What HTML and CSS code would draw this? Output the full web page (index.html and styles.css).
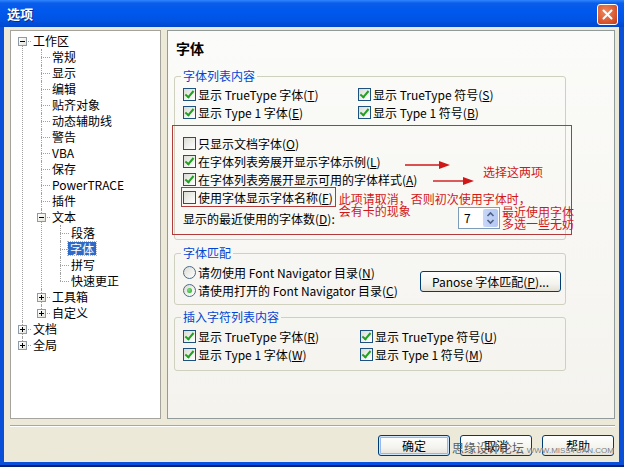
FILE: index.html
```html
<!DOCTYPE html>
<html lang="zh-CN">
  <head>
    <meta charset="UTF-8" />
    <title>选项</title>
    <link rel="stylesheet" href="styles.css">
  </head>
  <body>
    <div class="window">
      <div class="titlebar">
        <span class="title">选项</span>
        <span class="close">
          <svg width="11" height="11" viewBox="0 0 11 11"><path d="M1.5 1.5 L9.5 9.5 M9.5 1.5 L1.5 9.5" stroke="#fff" stroke-width="2" stroke-linecap="round"/></svg>
        </span>
      </div>
      <div class="client">
        <div class="main">
          <!-- 左侧树 -->
          <div class="tree">
            <ul class="root">
              <li><span class="box minus"></span><div class="label">工作区</div>
                <ul>
                  <li><div class="label">常规</div></li>
                  <li><div class="label">显示</div></li>
                  <li><div class="label">编辑</div></li>
                  <li><div class="label">贴齐对象</div></li>
                  <li><div class="label">动态辅助线</div></li>
                  <li><div class="label">警告</div></li>
                  <li><div class="label">VBA</div></li>
                  <li><div class="label">保存</div></li>
                  <li><div class="label">PowerTRACE</div></li>
                  <li><div class="label">插件</div></li>
                  <li><span class="box minus"></span><div class="label">文本</div>
                    <ul>
                      <li><div class="label">段落</div></li>
                      <li><div class="label"><span class="sel">字体</span></div></li>
                      <li><div class="label">拼写</div></li>
                      <li><div class="label">快速更正</div></li>
                    </ul>
                  </li>
                  <li><span class="box plus"></span><div class="label">工具箱</div></li>
                  <li><span class="box plus"></span><div class="label">自定义</div></li>
                </ul>
              </li>
              <li><span class="box plus"></span><div class="label">文档</div></li>
              <li><span class="box plus"></span><div class="label">全局</div></li>
            </ul>
          </div>

          <!-- 右侧页面 -->
          <div class="page">
            <h1 class="heading">字体</h1>

            <fieldset class="group">
              <legend>字体列表内容</legend>
              <div class="grid">
                <label class="opt"><i class="cb on"></i>显示 TrueType 字体(<u>T</u>)</label>
                <label class="opt"><i class="cb on"></i>显示 TrueType 符号(<u>S</u>)</label>
                <label class="opt"><i class="cb on"></i>显示 Type 1 字体(<u>E</u>)</label>
                <label class="opt"><i class="cb on"></i>显示 Type 1 符号(<u>B</u>)</label>
              </div>
              <div class="mark">
                <label class="opt row"><i class="cb"></i>只显示文档字体(<u>O</u>)</label>
                <label class="opt row"><i class="cb on"></i>在字体列表旁展开显示字体示例(<u>L</u>)</label>
                <label class="opt row"><i class="cb on"></i>在字体列表旁展开显示可用的字体样式(<u>A</u>)</label>
                <div class="row">
                  <label class="opt flag"><i class="cb"></i>使用字体显示字体名称(<u>F</u>)</label>
                  <span class="note">此项请取消，否则初次使用字体时，<br>会有卡的现象</span>
                </div>
                <div class="row count">
                  <span>显示的最近使用的字体数(<u>D</u>):</span>
                  <span class="spin">
                    <span class="val">7</span>
                    <span class="arrows">
                      <svg width="13" height="18" viewBox="0 0 13 18"><path d="M3.5 7 L6.5 4 L9.5 7 M3.5 11 L6.5 14 L9.5 11" fill="none" stroke="#4d6185" stroke-width="1.6"/></svg>
                    </span>
                  </span>
                  <span class="note small">最近使用字体<br>多选一些无妨</span>
                </div>
                <div class="callout">
                  <svg class="arrows-red" width="72" height="30" viewBox="0 0 72 30">
                    <line x1="0" y1="7" x2="36" y2="7" stroke="#d01818" stroke-width="1.4"/>
                    <polygon points="34,3 45,7 34,11" fill="#d01818"/>
                    <line x1="28" y1="23" x2="60" y2="23" stroke="#d01818" stroke-width="1.4"/>
                    <polygon points="58,19 69,23 58,27" fill="#d01818"/>
                  </svg>
                  <span class="note pick">选择这两项</span>
                </div>
              </div>
            </fieldset>

            <fieldset class="group match">
              <legend>字体匹配</legend>
              <div class="match-body">
                <div>
                  <label class="opt row"><i class="rb"></i>请勿使用 Font Navigator 目录(<u>N</u>)</label>
                  <label class="opt row"><i class="rb on"></i>请使用打开的 Font Navigator 目录(<u>C</u>)</label>
                </div>
                <button class="btn panose">Panose 字体匹配(<u>P</u>)...</button>
              </div>
            </fieldset>

            <fieldset class="group insert">
              <legend>插入字符列表内容</legend>
              <div class="grid wide">
                <label class="opt"><i class="cb on"></i>显示 TrueType 字体(<u>R</u>)</label>
                <label class="opt"><i class="cb on"></i>显示 TrueType 符号(<u>U</u>)</label>
                <label class="opt"><i class="cb on"></i>显示 Type 1 字体(<u>W</u>)</label>
                <label class="opt"><i class="cb on"></i>显示 Type 1 符号(<u>M</u>)</label>
              </div>
            </fieldset>
          </div>
        </div>

        <div class="sep"></div>

        <div class="footer">
          <button class="btn default">确定</button>
          <button class="btn">取消</button>
          <button class="btn">帮助</button>
        </div>
      </div>
      <div class="watermark">思缘设计论坛 <span>WWW.MISSYUAN.COM</span></div>
    </div>
  </body>
</html>
```

FILE: styles.css
```css
* {
  margin: 0;
  padding: 0;
  box-sizing: border-box;
}
body {
  width: 624px;
  height: 467px;
  overflow: hidden;
  font-family: "Noto Sans CJK SC", "Liberation Sans", sans-serif;
  font-size: 12px;
  color: #000;
  background: #0845cf;
}
ul {
  list-style: none;
}
u {
  text-decoration: underline;
  text-underline-offset: 1px;
}
.window {
  position: relative;
  width: 624px;
  height: 467px;
  display: flex;
  flex-direction: column;
  background: linear-gradient(90deg, #0a4fd8, #0552e6 50%, #0a4fd8);
  border-bottom: 2px solid #00207a;
}
/* 
  标题栏
*/
.titlebar {
  height: 27px;
  flex: none;
  display: flex;
  align-items: center;
  justify-content: space-between;
  padding: 0 6px 0 7px;
  background: linear-gradient(#2f86ff 0, #0a5de9 12%, #0058ee 40%, #0054e3 75%, #0047cc 100%);
}
.title {
  color: #fff;
  font-weight: bold;
  font-size: 13px;
  text-shadow: 1px 1px 0 #0b2a8a;
}
.close {
  width: 21px;
  height: 21px;
  margin-top: 1px;
  border: 1px solid #fff;
  border-radius: 3px;
  background: radial-gradient(circle at 40% 35%, #f08a5e, #d5512a 70%, #b83a18);
  display: flex;
  align-items: center;
  justify-content: center;
}
.client {
  flex: 1;
  margin: 0 5px 3px 4px;
  padding: 3px 4px 0 6px;
  background: #ece9d8;
  display: flex;
  flex-direction: column;
}
.main {
  height: 389px;
  display: flex;
  gap: 6px;
}
/* 
  左侧树
*/
.tree {
  width: 151px;
  background: #fff;
  border: 1px solid #a5a49c;
  padding-top: 2px;
}
.tree .root {
  padding-left: 7px;
}
.tree ul ul {
  padding-left: 19px;
}
.tree li {
  position: relative;
}
.tree li::before {
  content: "";
  position: absolute;
  left: 4px;
  top: 8px;
  width: 9px;
  border-top: 1px dotted #a0a0a0;
}
.tree li::after {
  content: "";
  position: absolute;
  left: 4px;
  top: 0;
  bottom: 0;
  border-left: 1px dotted #a0a0a0;
}
.tree .root > li:first-child::after {
  top: 8px;
}
.tree li:last-child::after {
  bottom: auto;
  height: 8px;
}
.tree .label {
  height: 16px;
  line-height: 16px;
  padding-left: 15px;
  white-space: nowrap;
}
.tree .box {
  position: absolute;
  z-index: 1;
  left: 0;
  top: 4px;
  width: 9px;
  height: 9px;
  border: 1px solid #8e9aa6;
  background: linear-gradient(135deg, #fff, #e6e4da);
}
.tree .box::before {
  content: "";
  position: absolute;
  left: 1px;
  top: 3px;
  width: 5px;
  height: 1px;
  background: #000;
}
.tree .box.plus::after {
  content: "";
  position: absolute;
  left: 3px;
  top: 1px;
  width: 1px;
  height: 5px;
  background: #000;
}
.tree .sel {
  display: inline-block;
  margin-left: -3px;
  padding: 0 2px;
  line-height: 13px;
  background: #316ac5;
  color: #fff;
  outline: 1px dotted #9ab4e0;
}
/* 
  右侧页面
*/
.page {
  width: 448px;
  border: 1px solid #919b9c;
  background: linear-gradient(#fbfbf9, #f4f3ee);
  padding: 9px 48px 0 6px;
}
.heading {
  font-size: 14px;
  line-height: 16px;
  font-weight: bold;
  padding-left: 2px;
  margin-bottom: 13px;
}
.group {
  border: 1px solid #d0d0bf;
  border-radius: 3px;
  padding: 2px 0 4px 8px;
}
.group legend {
  margin-left: -2px;
  padding: 0 2px;
  line-height: 14px;
  color: #0046d5;
}
.grid {
  display: grid;
  grid-template-columns: 175px auto;
  grid-auto-rows: 18px;
}
.grid.wide {
  grid-template-columns: 177px auto;
}
.opt {
  display: flex;
  align-items: center;
  white-space: nowrap;
}
.row {
  height: 18px;
  display: flex;
  align-items: center;
  white-space: nowrap;
}
.cb {
  position: relative;
  flex: none;
  width: 13px;
  height: 13px;
  margin-right: 2px;
  border: 1px solid #1c5180;
  background: linear-gradient(135deg, #dcdcd5, #fff);
}
.cb.on::after {
  content: "";
  position: absolute;
  left: 3px;
  top: 0;
  width: 3px;
  height: 7px;
  border-right: 2px solid #21a121;
  border-bottom: 2px solid #21a121;
  transform: rotate(40deg);
}
.rb {
  position: relative;
  flex: none;
  width: 13px;
  height: 13px;
  margin-right: 2px;
  border: 1px solid #4a6a8a;
  border-radius: 50%;
  background: linear-gradient(135deg, #dcdcd5, #fff);
}
.rb.on::after {
  content: "";
  position: absolute;
  left: 3px;
  top: 3px;
  width: 5px;
  height: 5px;
  border-radius: 50%;
  background: radial-gradient(circle at 40% 40%, #7be07b, #21a121);
}
/* 
  红色标注
*/
.mark {
  position: relative;
  margin: 4px -7px 0 -11px;
  padding: 8px 0 5px 10px;
  border: 1px solid #b23a3a;
}
.flag {
  height: 20px;
  margin-left: -2px;
  padding: 0 2px 0 1px;
  border: 1px solid #b23a3a;
}
.note {
  color: #d01818;
  line-height: 12px;
  white-space: nowrap;
}
.row > .note {
  align-self: flex-start;
  margin: 5px 0 0 3px;
}
.count {
  height: 22px;
  margin-top: 1px;
}
.spin {
  margin-left: auto;
  width: 42px;
  height: 22px;
  display: flex;
  border: 1px solid #7f9db9;
  background: #fff;
}
.spin .val {
  flex: 1;
  padding-left: 5px;
  line-height: 20px;
}
.spin .arrows {
  width: 15px;
  margin: 1px;
  border-radius: 2px;
  background: linear-gradient(90deg, #c8d6f8, #b4c8f4);
  display: flex;
  align-items: center;
  justify-content: center;
}
.count .note.small {
  align-self: center;
  margin: 0 -3px 0 2px;
  line-height: 12px;
}
.callout {
  position: absolute;
  left: 232px;
  top: 32px;
}
.callout .pick {
  position: absolute;
  left: 78px;
  top: 8px;
}
/* 
  字体匹配
*/
.match {
  margin-top: 6px;
  padding: 3px 0 5px 8px;
}
.match-body {
  display: flex;
  align-items: center;
}
/* 
  底部按钮
*/
.sep {
  margin-top: 6px;
  border-top: 1px solid #aca899;
  border-bottom: 1px solid #fff;
}
.footer {
  display: flex;
  justify-content: flex-end;
  gap: 10px;
  margin-top: 8px;
  padding-right: 1px;
}
.btn {
  width: 72px;
  height: 21px;
  padding: 0;
  white-space: nowrap;
  font-family: inherit;
  font-size: 12px;
  line-height: 19px;
  color: #000;
  border: 1px solid #003c74;
  border-radius: 3px;
  background: linear-gradient(#fff, #f4f3ee 60%, #e3e0d5);
}
.btn.default {
  box-shadow: inset 0 0 0 1px #cee7ff, inset 0 0 0 2px #98b8ea;
}
.btn.panose {
  flex: none;
  width: 141px;
  margin: 0 4px 0 auto;
}
.insert {
  margin-top: 5px;
  padding: 3px 0 7px 8px;
}
.watermark {
  position: absolute;
  left: 452px;
  top: 439px;
  color: #5c5c5c;
  font-size: 12px;
  white-space: nowrap;
}
.watermark span {
  font-family: "Liberation Sans", sans-serif;
  font-size: 8px;
  color: #7a7a7a;
  text-shadow: 0 0 1px #fff;
}
```
